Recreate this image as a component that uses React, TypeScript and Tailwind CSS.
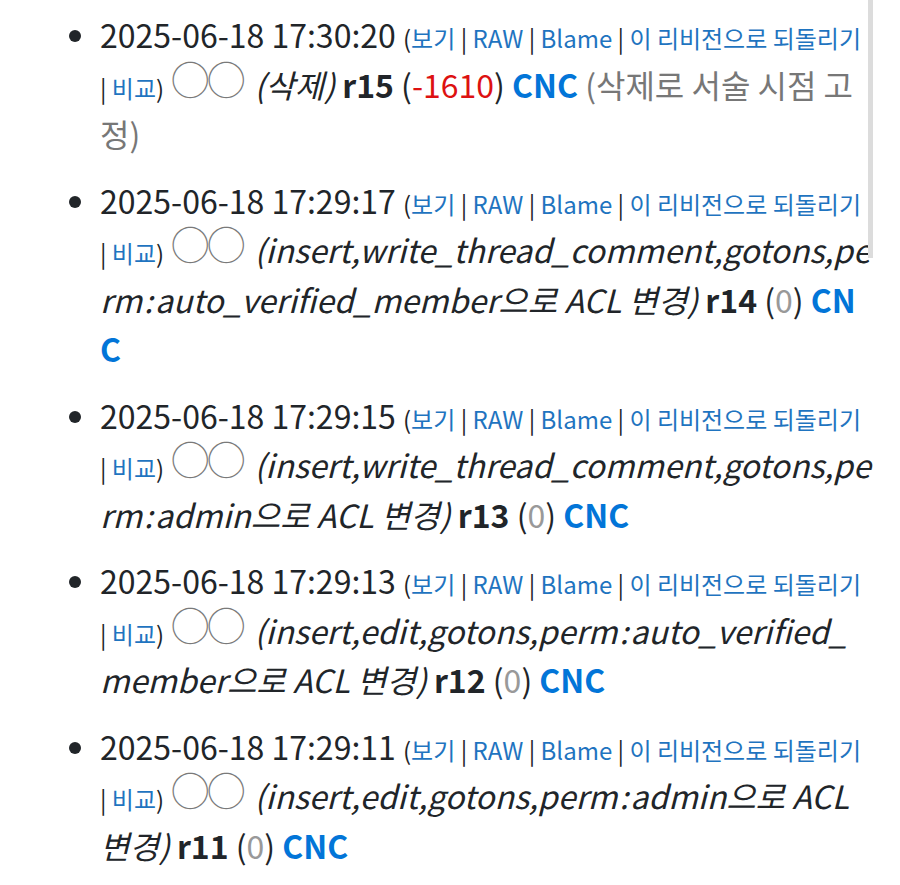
import React from "react";

type Rev = {
  time: string;
  log: string;
  rev: string;
  diff: number;
  comment?: string;
};

const revs: Rev[] = [
  { time: "2025-06-18 17:30:20", log: "(삭제)", rev: "r15", diff: -1610, comment: "(삭제로 서술 시점 고정)" },
  { time: "2025-06-18 17:29:17", log: "(insert,write_thread_comment,gotons,perm:auto_verified_member으로 ACL 변경)", rev: "r14", diff: 0 },
  { time: "2025-06-18 17:29:15", log: "(insert,write_thread_comment,gotons,perm:admin으로 ACL 변경)", rev: "r13", diff: 0 },
  { time: "2025-06-18 17:29:13", log: "(insert,edit,gotons,perm:auto_verified_member으로 ACL 변경)", rev: "r12", diff: 0 },
  { time: "2025-06-18 17:29:11", log: "(insert,edit,gotons,perm:admin으로 ACL 변경)", rev: "r11", diff: 0 },
];

function Links() {
  const items = ["보기", "RAW", "Blame", "이 리비전으로 되돌리기"];
  return (
    <span className="text-[24px] leading-none">
      (
      {items.map((t, i) => (
        <React.Fragment key={t}>
          {i > 0 && " | "}
          <a className="text-[#1f74c0]">{t}</a>
        </React.Fragment>
      ))}{" "}
      <span className="whitespace-nowrap">
        | <a className="text-[#1f74c0]">비교</a>)
      </span>
    </span>
  );
}

function Log({ text }: { text: string }) {
  const parts = text.split(":");
  return (
    <i>
      {parts.map((p, i) => (
        <React.Fragment key={i}>
          {i > 0 && <span className="mx-[2px]">:</span>}
          {p}
        </React.Fragment>
      ))}
    </i>
  );
}

export default function App() {
  return (
    <div
      className="relative min-h-[885px] bg-white text-[#212529]"
      style={{ fontFamily: '"Noto Sans CJK KR", "Noto Sans", sans-serif' }}
    >
      <ul className="list-disc pl-[100px] pr-[27px] pt-[10px] text-[32px] leading-[49.5px] break-all">
        {revs.map((r) => (
          <li key={r.rev} className="mb-[17px]">
            {r.time} <Links />{" "}
            <span className="relative top-[-4px] mr-[4px] text-[38px] leading-none tracking-[-2px] text-[#7a7a7a]">
              ◯◯
            </span>{" "}
            <Log text={r.log} /> <b>{r.rev}</b> (
            <span className={r.diff < 0 ? "text-[#dd1111]" : "text-[#999]"}>{r.diff}</span>
            ) <b className="text-[#0275d8]">CNC</b>
            {r.comment && <span className="text-[#777]"> {r.comment}</span>}
          </li>
        ))}
      </ul>
      {/* overlay scrollbar */}
      <div className="absolute right-[27px] top-0 h-[258px] w-[5px] bg-[#dcdcdc]" />
    </div>
  );
}
